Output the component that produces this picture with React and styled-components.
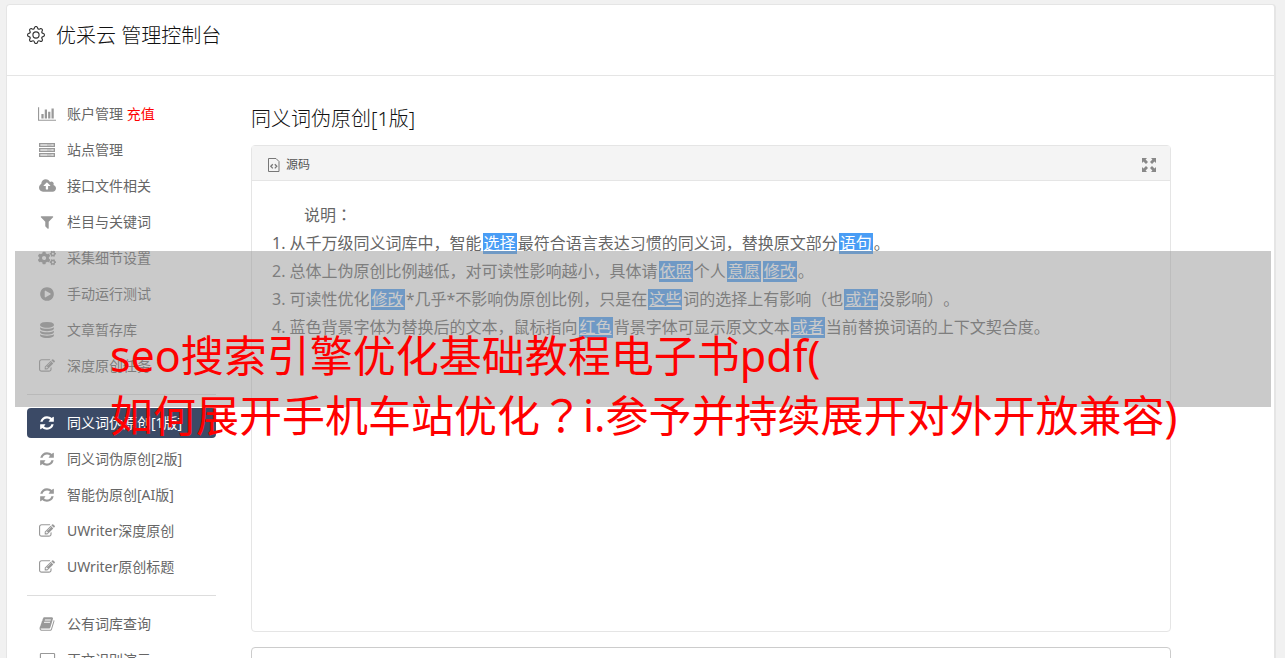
import React from 'react';
import styled, { createGlobalStyle, css } from 'styled-components';
import { BsGear } from 'react-icons/bs';
import { FaCogs } from 'react-icons/fa';

// [viewBox width, path], all 1792 high
const glyphs = {
  chart: [
    2048,
    'M640 896v512h-256v-512h256zm384-512v1024h-256v-1024h256zm1024 1152v128h-2048v-1536h128v1408h1920zm-640-896v768h-256v-768h256zm384-384v1152h-256v-1152h256z'
  ],
  cloud: [
    1920,
    'M1280 864q0-14-9-23l-352-352q-9-9-23-9t-23 9l-351 351q-10 12-10 24 0 14 9 23t23 9h224v352q0 13 9.5 22.5t22.5 9.5h192q13 0 22.5-9.5t9.5-22.5v-352h224q13 0 22.5-9.5t9.5-22.5zm640 288q0 159-112.5 271.5t-271.5 112.5h-1088q-185 0-316.5-131.5t-131.5-316.5q0-130 70-240t188-165q-2-30-2-43 0-212 150-362t362-150q156 0 285.5 87t188.5 231q71-62 166-62 106 0 181 75t75 181q0 76-41 138 130 31 213.5 135.5t83.5 238.5z'
  ],
  filter: [
    1792,
    'M1595 295q17 41-14 70l-493 493v742q0 42-39 59-13 5-25 5-27 0-45-19l-256-256q-19-19-19-45v-486l-493-493q-31-29-14-70 17-39 59-39h1280q42 0 59 39z'
  ],
  play: [
    1792,
    'M896 128q209 0 385.5 103t279.5 279.5 103 385.5-103 385.5-279.5 279.5-385.5 103-385.5-103-279.5-279.5-103-385.5 103-385.5 279.5-279.5 385.5-103zm384 823q32-18 32-55t-32-55l-544-320q-31-19-64-1-32 19-32 56v640q0 37 32 56 16 8 32 8 17 0 32-9z'
  ],
  database: [
    1792,
    'M896 768q237 0 443-43t325-127v170q0 69-103 128t-280 93.5-385 34.5-385-34.5-280-93.5-103-128v-170q119 84 325 127t443 43zm0 768q237 0 443-43t325-127v170q0 69-103 128t-280 93.5-385 34.5-385-34.5-280-93.5-103-128v-170q119 84 325 127t443 43zm0-384q237 0 443-43t325-127v170q0 69-103 128t-280 93.5-385 34.5-385-34.5-280-93.5-103-128v-170q119 84 325 127t443 43zm0-1152q208 0 385 34.5t280 93.5 103 128v128q0 69-103 128t-280 93.5-385 34.5-385-34.5-280-93.5-103-128v-128q0-69 103-128t280-93.5 385-34.5z'
  ],
  edit: [
    1792,
    'M888 1184l116-116-152-152-116 116v56h96v96h56zm440-720q-16-16-33 1l-350 350q-17 17-1 33t33-1l350-350q17-17 1-33zm80 594v190q0 119-84.5 203.5t-203.5 84.5h-832q-119 0-203.5-84.5t-84.5-203.5v-832q0-119 84.5-203.5t203.5-84.5h832q63 0 117 25 15 7 18 23 3 17-9 29l-49 49q-14 14-32 8-23-6-45-6h-832q-66 0-113 47t-47 113v832q0 66 47 113t113 47h832q66 0 113-47t47-113v-126q0-13 9-22l64-64q15-15 35-7t20 29zm-96-738l288 288-672 672h-288v-288zm444 132l-92 92-288-288 92-92q28-28 68-28t68 28l152 152q28 28 28 68t-28 68z'
  ],
  refresh: [
    1792,
    'M1639 1056q0 5-1 7-64 268-268 434.5t-478 166.5q-146 0-282.5-55t-243.5-157l-129 129q-19 19-45 19t-45-19-19-45v-448q0-26 19-45t45-19h448q26 0 45 19t19 45-19 45l-137 137q71 66 161 102t187 36q134 0 250-65t186-179q11-17 53-117 8-23 30-23h192q13 0 22.5 9.5t9.5 22.5zm25-800v448q0 26-19 45t-45 19h-448q-26 0-45-19t-19-45 19-45l138-138q-148-137-349-137-134 0-250 65t-186 179q-11 17-53 117-8 23-30 23h-199q-13 0-22.5-9.5t-9.5-22.5v-7q65-268 270-434.5t480-166.5q146 0 284 55.5t245 156.5l130-129q19-19 45-19t45 19 19 45z'
  ],
  book: [
    1792,
    'M1703 478q40 57 18 129l-275 906q-19 64-76.5 107.5t-122.5 43.5h-923q-77 0-148.5-53.5t-99.5-131.5q-24-67-2-127 0-4 3-27t4-37q1-8-3-21.5t-3-19.5q2-11 8-21t16.5-23.5 16.5-23.5q23-38 45-91.5t30-91.5q3-10 .5-30t-.5-28q3-11 17-28t17-23q21-36 42-92t25-90q1-9-2.5-32t.5-28q4-13 22-30.5t22-22.5q19-26 42.5-84.5t27.5-96.5q1-8-3-25.5t-2-26.5q2-8 9-18t18-23 17-21q8-12 16.5-30.5t15-35 16-36 19.5-32 26.5-23.5 36-11.5 47.5 5.5l-1 3q38-9 51-9h761q74 0 114 56t18 130l-274 906q-36 119-71.5 153.5t-128.5 34.5h-869q-27 0-38 15-11 16-1 43 24 70 144 70h923q29 0 56-15.5t35-41.5l300-987q7-22 5-57 38 15 59 43zm-1064 2q-4 13 2 22.5t20 9.5h608q13 0 25.5-9.5t16.5-22.5l21-64q4-13-2-22.5t-20-9.5h-608q-13 0-25.5 9.5t-16.5 22.5zm-83 256q-4 13 2 22.5t20 9.5h608q13 0 25.5-9.5t16.5-22.5l21-64q4-13-2-22.5t-20-9.5h-608q-13 0-25.5 9.5t-16.5 22.5z'
  ],
  laptop: [
    1920,
    'M256 1280q-66 0-113-47t-47-113v-864q0-66 47-113t113-47h1408q66 0 113 47t47 113v864q0 66-47 113t-113 47h-1408zm-32-1024v864q0 13 9.5 22.5t22.5 9.5h1408q13 0 22.5-9.5t9.5-22.5v-864q0-13-9.5-22.5t-22.5-9.5h-1408q-13 0-22.5 9.5t-9.5 22.5zm1536 1088h160v96q0 40-47 68t-113 28h-1600q-66 0-113-28t-47-68v-96h1760z'
  ]
};

const Glyph = ({ name }) => {
  const [width, d] = glyphs[name];
  return (
    <svg width={Math.round(width / 112)} height="16" viewBox={`0 0 ${width} 1792`} fill="currentColor">
      <path d={d} />
    </svg>
  );
};

const ServerIcon = () => (
  <svg width="18" height="16" viewBox="0 0 18 16" fill="none" stroke="currentColor">
    {[1.5, 6.5, 11.5].map((y) => (
      <g key={y}>
        <rect x="1.5" y={y} width="15" height="3" fill="currentColor" fillOpacity="0.6" />
        <path d={`M3 ${y + 1.5}h6M13.5 ${y + 1.5}h1.5`} stroke="#fff" strokeOpacity="0.6" />
      </g>
    ))}
  </svg>
);

const SourceIcon = () => (
  <svg width="12" height="14" viewBox="0 0 12 14" fill="none" stroke="#777">
    <path d="M.5.5H8l3 3v10H.5z" />
    <path d="M4.8 6.2L2.8 8.3l2 2.1M6.8 6.2l2 2.1-2 2.1" strokeWidth="1.3" />
  </svg>
);

const ExpandIcon = () => (
  <svg width="14" height="14" viewBox="0 0 14 14" fill="#888">
    <path d="M0 0h5L3.6 1.5 6 4 4 6 1.5 3.6 0 5zM14 0v5l-1.5-1.4L10 6 8 4l2.4-2.5L9 0zM0 14V9l1.5 1.4L4 8l2 2-2.4 2.5L5 14zM14 14H9l1.4-1.5L8 10l2-2 2.5 2.4L14 9z" />
  </svg>
);

const menu = [
  [
    { icon: <Glyph name="chart" />, text: '账户管理', extra: '充值' },
    { icon: <ServerIcon />, text: '站点管理' },
    { icon: <Glyph name="cloud" />, text: '接口文件相关' },
    { icon: <Glyph name="filter" />, text: '栏目与关键词' },
    { icon: <FaCogs size={18} />, text: '采集细节设置' },
    { icon: <Glyph name="play" />, text: '手动运行测试' },
    { icon: <Glyph name="database" />, text: '文章暂存库' },
    { icon: <Glyph name="edit" />, text: '深度原创任务' }
  ],
  [
    { icon: <Glyph name="refresh" />, text: '同义词伪原创[1版]', active: true },
    { icon: <Glyph name="refresh" />, text: '同义词伪原创[2版]' },
    { icon: <Glyph name="refresh" />, text: '智能伪原创[AI版]' },
    { icon: <Glyph name="edit" />, text: 'UWriter深度原创' },
    { icon: <Glyph name="edit" />, text: 'UWriter原创标题' }
  ],
  [
    { icon: <Glyph name="book" />, text: '公有词库查询' },
    { icon: <Glyph name="laptop" />, text: '正文识别演示' }
  ]
];

const App = () => {
  return (
    <>
      <GlobalStyle />
      <Page>
        <Card>
          <Header>
            <BsGear size={18} />
            <Title>优采云 管理控制台</Title>
          </Header>
          <Content>
            <Sidebar>
              {menu.map((group, index) => (
                <Group key={index}>
                  {group.map((item) => (
                    <li key={item.text}>
                      <MenuLink href="#" $active={item.active}>
                        <IconBox>{item.icon}</IconBox>
                        <Label>
                          {item.text} {item.extra && <Red>{item.extra}</Red>}
                        </Label>
                      </MenuLink>
                    </li>
                  ))}
                </Group>
              ))}
            </Sidebar>
            <Main>
              <Heading>同义词伪原创[1版]</Heading>
              <Editor>
                <Toolbar>
                  <ToolButton>
                    <SourceIcon />
                    <Label>源码</Label>
                  </ToolButton>
                  <ToolButton aria-label="全屏">
                    <ExpandIcon />
                  </ToolButton>
                </Toolbar>
                <Document>
                  <Line $indent>
                    说明<Mark>：</Mark>
                  </Line>
                  <Line>
                    1. 从千万级同义词库中，智能<Word href="#">选择</Word>
                    最符合语言表达习惯的同义词，替换原文部分<Word href="#">语句</Word>。
                  </Line>
                  <Line>
                    2. 总体上伪原创比例越低，对可读性影响越小，具体请<Word href="#">依照</Word>
                    个人<Word href="#">意愿</Word>
                    <Word href="#">修改</Word>。
                  </Line>
                  <Line>
                    3. 可读性优化<Word href="#">修改</Word>
                    *几乎*不影响伪原创比例，只是在<Word href="#">这些</Word>
                    词的选择上有影响（也<Word href="#">或许</Word>没影响）。
                  </Line>
                  <Line>
                    4. 蓝色背景字体为替换后的文本，鼠标指向<Word href="#">红色</Word>
                    背景字体可显示原文文本<Word href="#">或者</Word>
                    当前替换词语的上下文契合度。
                  </Line>
                </Document>
              </Editor>
              <Result aria-label="结果" />
            </Main>
          </Content>
        </Card>
        <Banner>
          seo搜索引擎优化基础教程电子书pdf(
          <br />
          如何展开手机车站优化<Mark>？</Mark>i.参予并持续展开对外开放兼容)
        </Banner>
      </Page>
    </>
  );
};

export default App;

const GlobalStyle = createGlobalStyle`
  * {
    box-sizing: border-box;
  }
  html {
    scrollbar-width: none;
  }
  body {
    margin: 0;
    background: #f1f1f1;
    color: #333;
    font-family: 'Noto Sans', 'Noto Sans CJK SC', sans-serif;
    font-size: 14px;
    text-spacing-trim: space-all;
  }
  button, textarea {
    font-family: inherit;
  }
`;

const Page = styled.div`
  position: relative;
  height: 100vh;
  padding: 4px 9px 0 6px;
  overflow: hidden;
`;

const Card = styled.div`
  background: #fff;
  border: 1px solid #e5e5e5;
  border-right-width: 2px;
  border-radius: 4px;
`;

const Header = styled.header`
  display: flex;
  align-items: center;
  gap: 11px;
  height: 71px;
  padding: 0 20px 11px;
  border-bottom: 1px solid #e5e5e5;
`;

const Title = styled.h1`
  margin: 0;
  padding-top: 3px;
  color: #111;
  font-size: 20px;
  font-weight: 300;
  line-height: 28px;
`;

const Content = styled.div`
  display: flex;
  gap: 35px;
  padding: 23px 103px 24px 20px;
`;

const Sidebar = styled.nav`
  flex: none;
  width: 189px;
`;

const Group = styled.ul`
  display: flex;
  flex-direction: column;
  gap: 6px;
  margin: 0;
  padding: 0;
  list-style: none;

  & + & {
    margin-top: 13px;
    padding-top: 13px;
    border-top: 1px solid #ddd;
  }
`;

const IconBox = styled.span`
  display: flex;
  flex: none;
  justify-content: center;
  width: 20px;
  color: #999;
`;

const Label = styled.span`
  padding-bottom: 2px;
`;

const MenuLink = styled.a`
  display: flex;
  align-items: center;
  gap: 10px;
  height: 30px;
  padding: 0 10px;
  border-radius: 4px;
  color: #666;
  text-decoration: none;
  white-space: nowrap;

  ${(props) =>
    props.$active &&
    css`
      background: #3b4a66;
      color: #fff;

      ${IconBox} {
        color: #fff;
      }
    `}
`;

const Red = styled.span`
  color: #f00;
`;

const Main = styled.main`
  flex: 1;
  min-width: 0;
`;

const Heading = styled.h2`
  margin: 6px 0 12px;
  color: #111;
  font-size: 20px;
  font-weight: 300;
  line-height: 28px;
`;

const Editor = styled.section`
  min-height: 487px;
  border: 1px solid #e5e5e5;
  border-radius: 4px;
`;

const Toolbar = styled.div`
  display: flex;
  align-items: center;
  justify-content: space-between;
  height: 35px;
  padding: 3px 14px 0 16px;
  background: #f4f4f4;
  border-bottom: 1px solid #e5e5e5;
`;

const ToolButton = styled.button`
  display: flex;
  align-items: center;
  gap: 6px;
  padding: 0;
  border: 0;
  background: none;
  color: #555;
  font-size: 12px;
`;

const Document = styled.div`
  padding: 20px;
  color: #666;
  font-size: 16px;
  line-height: 28px;
`;

const Line = styled.p`
  margin: 0;
  text-indent: ${(props) => (props.$indent ? '32px' : '0')};
`;

// full-width marks centred in their cell
const Mark = styled.span`
  font-family: 'Noto Sans CJK JP', sans-serif;
  line-height: 1;
`;

const Word = styled.a`
  display: inline-block;
  margin: 0 1px;
  padding: 0 1px;
  background: #499df5;
  color: #fff;
  line-height: 21px;
  text-indent: 0;
`;

const Result = styled.textarea`
  display: block;
  width: 100%;
  height: 120px;
  margin-top: 15px;
  border: 1px solid #ccc;
  border-radius: 4px;
  resize: none;
`;

const Banner = styled.div`
  position: absolute;
  top: 251px;
  left: 15px;
  right: 14px;
  height: 156px;
  padding: 75px 0 0 95px;
  background: rgba(150, 150, 150, 0.5);
  color: #f00;
  font-size: 43px;
  line-height: 60px;
  white-space: nowrap;
`;
